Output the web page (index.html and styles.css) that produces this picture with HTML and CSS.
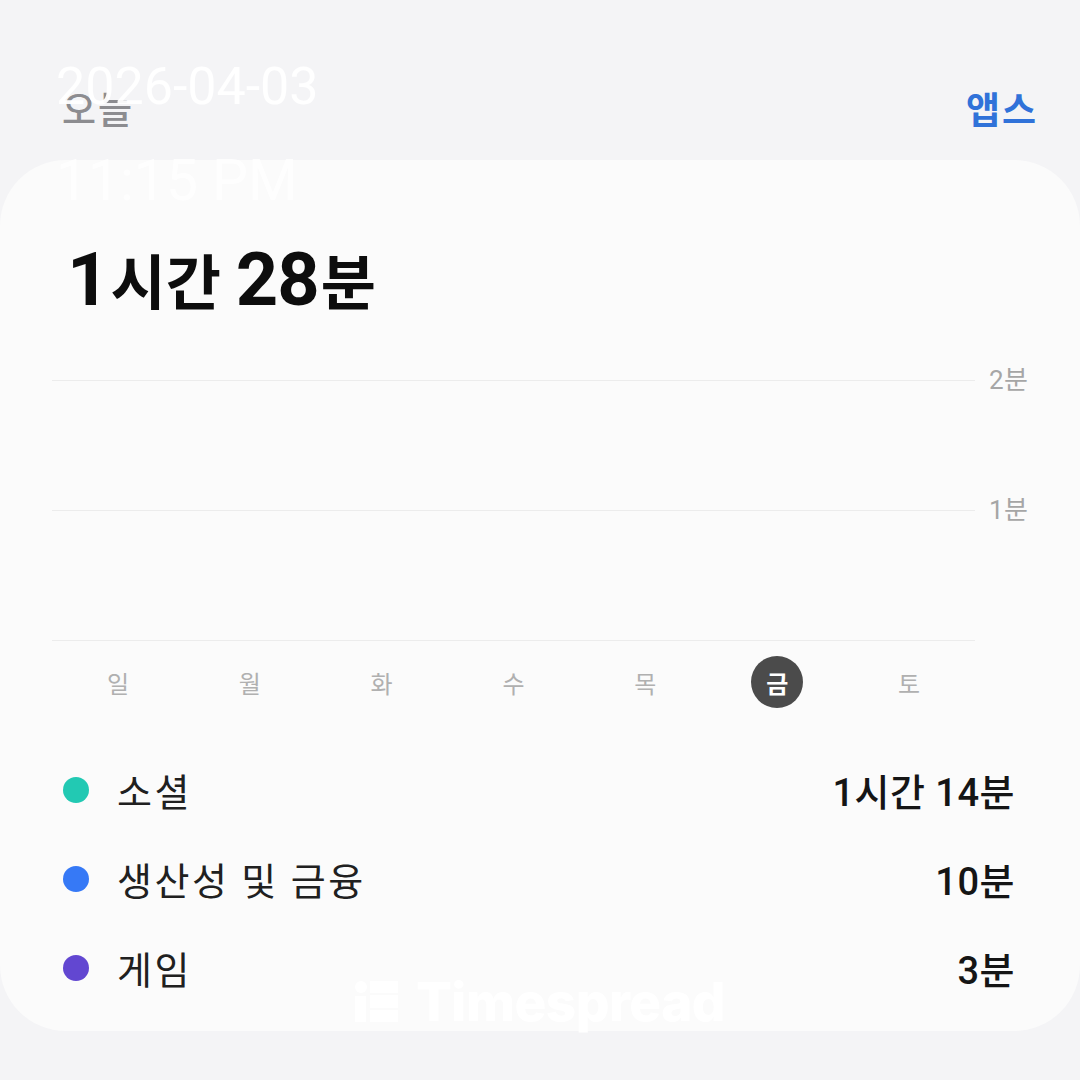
FILE: index.html
```html
<!DOCTYPE html>
<html lang="ko">
<head>
  <meta charset="UTF-8">
  <meta name="viewport" content="width=device-width, initial-scale=1">
  <title>오늘 - 사용 시간</title>
  <link rel="stylesheet" href="styles.css">
</head>
<body>

  <header class="top">
    <span class="today">오늘</span>
    <a class="apps" href="#">앱스</a>
  </header>

  <section class="card">
    <div class="total">
      <span class="num">1</span><span class="unit">시간</span>
      <span class="num">28</span><span class="unit">분</span>
    </div>

    <div class="chart">
      <div class="grid-row">
        <div class="line"></div>
        <span class="tick">2분</span>
      </div>
      <div class="grid-row">
        <div class="line"></div>
        <span class="tick">1분</span>
      </div>
      <div class="grid-row last">
        <div class="line"></div>
        <span class="tick"></span>
      </div>
    </div>

    <div class="days">
      <span class="day">일</span>
      <span class="day">월</span>
      <span class="day">화</span>
      <span class="day">수</span>
      <span class="day">목</span>
      <span class="day active"><b>금</b></span>
      <span class="day">토</span>
    </div>

    <ul class="legend">
      <li class="item">
        <span class="dot social"></span>
        <span class="name">소셜</span>
        <span class="value">1시간 14분</span>
      </li>
      <li class="item">
        <span class="dot work"></span>
        <span class="name">생산성 및 금융</span>
        <span class="value">10분</span>
      </li>
      <li class="item">
        <span class="dot game"></span>
        <span class="name">게임</span>
        <span class="value">3분</span>
      </li>
    </ul>
  </section>

  <!-- filigrane de la capture -->
  <div class="stamp">
    <div class="stamp-date">2026-04-03</div>
    <div class="stamp-time">11:15 PM</div>
  </div>

  <div class="brand">
    <svg class="brand-logo" width="43" height="42" viewBox="0 0 43 42">
      <circle cx="6" cy="6" r="6" fill="#fff"/>
      <rect x="0" y="15" width="11" height="26" fill="#fff"/>
      <rect x="15" y="0" width="28" height="12" fill="#fff"/>
      <rect x="15" y="14" width="28" height="13" fill="#fff"/>
      <rect x="15" y="29" width="28" height="12" fill="#fff"/>
    </svg>
    <span class="brand-name">Timespread</span>
  </div>

</body>
</html>
```

FILE: styles.css
```css
/* Style global */
body {
  margin: 0;
  width: 1080px;
  height: 1080px;
  overflow: hidden;
  position: relative;
  font-family: Roboto, "Noto Sans CJK KR", sans-serif;
  background: #f4f4f6;
  color: #1a1a1a;
}
/* En-tête */
.top {
  height: 160px;
  display: flex;
  justify-content: space-between;
  align-items: center;
  padding: 0 42px 0 62px;
  box-sizing: border-box;
}
.today {
  font-size: 37px;
  font-weight: 500;
  letter-spacing: 2px;
  color: #8c8c90;
  margin-top: 56px;
}
.apps {
  font-size: 37px;
  font-weight: 700;
  letter-spacing: 2px;
  color: #3072d9;
  text-decoration: none;
  margin-top: 56px;
}
/* Carte principale */
.card {
  background: #fbfbfb;
  border-radius: 66px;
  height: 871px;
  box-sizing: border-box;
  padding: 83px 65px 0 52px;
}
.total {
  height: 74px;
  line-height: 74px;
  padding-left: 15px;
  font-size: 60px;
  font-weight: 700;
  color: #0d0d0d;
  white-space: nowrap;
}
.total .num {
  font-size: 74px;
  letter-spacing: -1px;
}
.total .unit {
  font-size: 60px;
  margin-left: 2px;
}
/* Graphique */
.chart {
  margin-top: 63px;
}
.grid-row {
  display: flex;
  height: 130px;
}
.grid-row.last {
  height: 16px;
}
.line {
  flex-shrink: 0;
  width: 923px;
  height: 0;
  border-top: 1.5px solid #ececec;
}
.tick {
  margin: -15px 0 0 14px;
  font-size: 26px;
  line-height: 30px;
  letter-spacing: 0.5px;
  color: #a6a6a6;
  white-space: nowrap;
}
.days {
  width: 923px;
  height: 52px;
  display: grid;
  grid-template-columns: repeat(7, 1fr);
  align-items: center;
  justify-items: center;
}
.day {
  font-size: 24px;
  color: #b0b0b0;
}
.day.active {
  width: 52px;
  height: 52px;
  border-radius: 50%;
  background: #4b4b4b;
  color: #fff;
  display: flex;
  align-items: center;
  justify-content: center;
}
/* Légende */
.legend {
  list-style: none;
  margin: 37px 0 0;
  padding: 0 0 0 11px;
}
.item {
  height: 89px;
  display: flex;
  align-items: center;
}
.dot {
  width: 26px;
  height: 26px;
  border-radius: 50%;
  margin-right: 28px;
}
.dot.social { background: #22c9b3; }
.dot.work { background: #3679f6; }
.dot.game { background: #6247d1; }
.name {
  flex: 1;
  font-size: 38px;
  letter-spacing: 2.5px;
  color: #202020;
}
.value {
  font-size: 38px;
  font-weight: 500;
  letter-spacing: 0.5px;
  color: #151515;
}
/* Filigranes */
.stamp {
  position: absolute;
  left: 56px;
  top: 57px;
  color: rgba(255, 255, 255, 0.95);
  font-family: Roboto, sans-serif;
  font-weight: 400;
}
.stamp-date {
  font-size: 52px;
  line-height: 60px;
}
.stamp-time {
  font-size: 57px;
  line-height: 64px;
  margin-top: 32px;
  color: rgba(255, 255, 255, 0.8);
}
.brand {
  position: absolute;
  left: 355px;
  top: 970px;
  display: flex;
  align-items: center;
  gap: 18px;
  color: #fff;
}
.brand-name {
  font-family: Inter, sans-serif;
  font-size: 53px;
  font-weight: 800;
  letter-spacing: -0.5px;
}
```
